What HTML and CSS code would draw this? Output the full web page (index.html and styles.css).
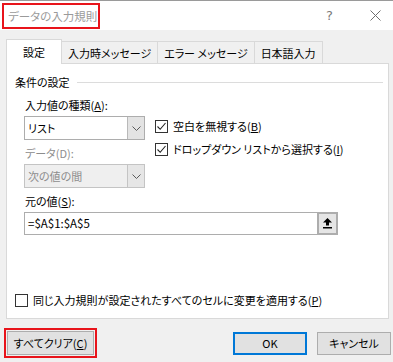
FILE: index.html
```html
<!DOCTYPE html>
<html lang="ja">
<head>
    <meta charset="UTF-8">
    <title>データの入力規則</title>
    <link rel="stylesheet" href="styles.css">
</head>
<body>
    <div class="dialog">
        <div class="titlebar">
            <div class="title-box"><span class="title">データの入力規則</span></div>
            <span class="help">?</span>
            <span class="close">
                <svg width="11" height="11" viewBox="0 0 11 11"><path d="M0.5 0.5 L10.5 10.5 M10.5 0.5 L0.5 10.5" stroke="#6f6f6f" stroke-width="1" fill="none"/></svg>
            </span>
        </div>

        <div class="tabs">
            <div class="tab active">設定</div>
            <div class="tab">入力時メッセージ</div>
            <div class="tab">エラー メッセージ</div>
            <div class="tab">日本語入力</div>
        </div>

        <div class="panel">
            <div class="group-title">条件の設定</div>

            <div class="criteria">
                <div class="criteria-left">
                    <div class="field-label">入力値の種類(<u>A</u>):</div>
                    <div class="combo">
                        <span class="combo-value">リスト</span>
                        <span class="combo-arrow">
                            <svg width="9" height="5" viewBox="0 0 9 5"><path d="M0.5 0.5 L4.5 4.5 L8.5 0.5" stroke="#5a5a5a" fill="none"/></svg>
                        </span>
                    </div>
                    <div class="field-label disabled">データ(D):</div>
                    <div class="combo disabled">
                        <span class="combo-value">次の値の間</span>
                        <span class="combo-arrow">
                            <svg width="9" height="5" viewBox="0 0 9 5"><path d="M0.5 0.5 L4.5 4.5 L8.5 0.5" stroke="#5a5a5a" fill="none"/></svg>
                        </span>
                    </div>
                </div>
                <div class="criteria-right">
                    <div class="check">
                        <span class="box"><svg width="11" height="11" viewBox="0 0 11 11"><path d="M1.5 5.5 L4.2 8.3 L9.5 2" stroke="#222" stroke-width="1.1" fill="none"/></svg></span>
                        <span>空白を無視する(<u>B</u>)</span>
                    </div>
                    <div class="check">
                        <span class="box"><svg width="11" height="11" viewBox="0 0 11 11"><path d="M1.5 5.5 L4.2 8.3 L9.5 2" stroke="#222" stroke-width="1.1" fill="none"/></svg></span>
                        <span>ドロップダウン リストから選択する(<u>I</u>)</span>
                    </div>
                </div>
            </div>

            <div class="field-label source-label">元の値(<u>S</u>):</div>
            <div class="source">
                <span class="source-value">=$A$1:$A$5</span>
                <span class="ref-btn">
                    <svg width="9" height="11" viewBox="0 0 9 11"><path d="M4.5 0 L9 4.5 L6 4.5 L6 7.5 L3 7.5 L3 4.5 L0 4.5 Z" fill="#000"/><rect x="0" y="9" width="9" height="1.5" fill="#000"/></svg>
                </span>
            </div>

            <div class="check apply">
                <span class="box"></span>
                <span>同じ入力規則が設定されたすべてのセルに変更を適用する(<u>P</u>)</span>
            </div>
        </div>

        <div class="footer">
            <div class="highlight">
                <button class="btn clear-btn">すべてクリア(<u>C</u>)</button>
            </div>
            <button class="btn primary">OK</button>
            <button class="btn">キャンセル</button>
        </div>
    </div>
</body>
</html>
```

FILE: styles.css
```css
* {
    margin: 0;
    padding: 0;
    box-sizing: border-box;
}

body {
    font-family: "Noto Sans CJK JP", "Noto Sans", sans-serif;
    font-size: 11px;
    font-feature-settings: "palt";
    color: #000;
    background: #f0f0f0;
}

.dialog {
    width: 393px;
    height: 362px;
    border-top: 1px solid #9a9a9a;
    background: #f0f0f0;
}

/* タイトルバー */
.titlebar {
    height: 29px;
    background: #fff;
    display: flex;
    align-items: center;
}

.title-box {
    margin-left: 2px;
    height: 26px;
    width: 98px;
    border: 2px solid #e8141b;
    display: flex;
    align-items: center;
    padding-left: 4px;
    white-space: nowrap;
}

.title {
    color: #9a9a9a;
    font-size: 11.5px;
}

.help {
    margin-left: auto;
    margin-right: 37px;
    color: #7a7a7a;
    font-family: "DejaVu Sans", sans-serif;
    font-size: 13px;
}

.close {
    margin-right: 12px;
    display: flex;
}

/* タブ */
.tabs {
    display: flex;
    align-items: flex-end;
    margin-top: 9px;
    padding-left: 6px;
    position: relative;
    z-index: 1;
}

.tab {
    height: 22px;
    padding: 0 6px;
    border: 1px solid #d9d9d9;
    border-bottom: none;
    border-left: none;
    background: #f0f0f0;
    display: flex;
    align-items: center;
    justify-content: center;
    line-height: 16px;
    white-space: nowrap;
}

.tab.active {
    width: 56px;
    height: 25px;
    margin-bottom: -1px;
    padding: 0;
    border-left: 1px solid #d9d9d9;
    background: #fff;
}

/* パネル */
.panel {
    margin: 0 4px 0 6px;
    height: 256px;
    background: #fff;
    border: 1px solid #d9d9d9;
    padding: 10px 5px 10px 8px;
    display: flex;
    flex-direction: column;
}

.group-title {
    display: flex;
    align-items: center;
    line-height: 16px;
}

.group-title::after {
    content: '';
    flex: 1;
    height: 1px;
    background: #dcdcdc;
    margin-left: 7px;
}

.criteria {
    display: flex;
    margin-top: 7px;
    margin-left: 9px;
}

.criteria-left {
    width: 121px;
}

.criteria-right {
    margin-left: 10px;
    padding-top: 21px;
    display: flex;
    flex-direction: column;
    gap: 7px;
}

.field-label {
    line-height: 16px;
    padding-left: 1px;
}

.field-label.disabled {
    color: #8d8d8d;
    margin-top: 5px;
}

.combo {
    margin-top: 3px;
    height: 24px;
    border: 1px solid #adadad;
    background: #fff;
    display: flex;
}

.combo-value {
    flex: 1;
    padding-left: 3px;
    line-height: 22px;
}

.combo-arrow {
    width: 17px;
    background: #e3e3e3;
    border-left: 1px solid #b9b9b9;
    display: flex;
    align-items: center;
    justify-content: center;
}

.combo.disabled {
    background: #efefef;
    border-color: #c4c4c4;
    color: #8d8d8d;
}

.combo.disabled .combo-arrow {
    background: #e6e6e6;
    border-left-color: #c4c4c4;
}

.check {
    display: flex;
    align-items: center;
    gap: 5px;
    line-height: 16px;
}

.box {
    width: 13px;
    height: 13px;
    border: 1px solid #333;
    background: #fff;
    display: flex;
}

.source-label {
    margin-top: 5px;
    margin-left: 9px;
}

.source {
    margin-top: 3px;
    margin-left: 9px;
    width: 314px;
    height: 23px;
    display: flex;
    border: 1px solid #adadad;
    border-right: none;
}

.source-value {
    flex: 1;
    padding-left: 3px;
    line-height: 21px;
    font-size: 11.5px;
}

.ref-btn {
    width: 21px;
    margin-top: -1px;
    height: 23px;
    border: 2px solid #adadad;
    background: #e5e5e5;
    display: flex;
    align-items: center;
    justify-content: center;
}

.apply {
    margin-top: auto;
}

/* ボタン */
.footer {
    display: flex;
    align-items: center;
    margin-top: 9px;
    padding: 0 2px 0 4px;
}

.highlight {
    border: 2px solid #e8141b;
    padding: 1px;
}

.btn {
    width: 74px;
    height: 23px;
    border: 1px solid #adadad;
    background: #e1e1e1;
    font-family: inherit;
    font-size: 11px;
    font-feature-settings: "palt";
    color: #000;
}

.clear-btn {
    width: 87px;
    height: 24px;
}

.btn.primary {
    margin-left: auto;
    border: 2px solid #0078d7;
}

.btn + .btn {
    margin-left: 10px;
}
```
